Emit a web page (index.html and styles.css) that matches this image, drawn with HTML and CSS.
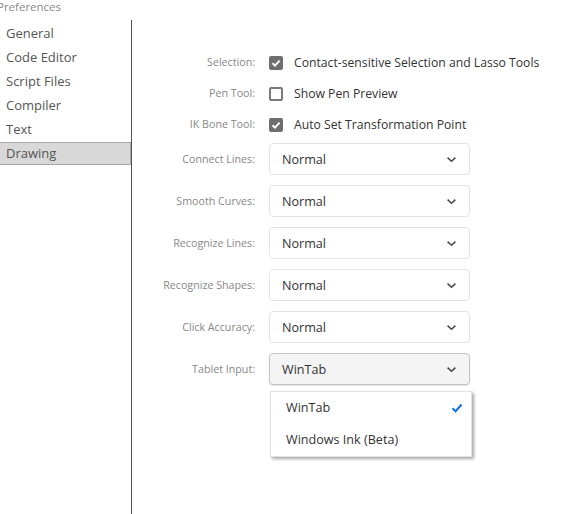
FILE: index.html
```html
<!DOCTYPE html>
<html>
<head>
<meta charset="utf-8">
<link rel="stylesheet" href="styles.css">
</head>
<body>
<div class="title">Preferences</div>
<div class="window">
  <nav class="sidebar">
    <div class="nav-item">General</div>
    <div class="nav-item">Code Editor</div>
    <div class="nav-item">Script Files</div>
    <div class="nav-item">Compiler</div>
    <div class="nav-item">Text</div>
    <div class="nav-item selected">Drawing</div>
  </nav>
  <main class="panel">
    <div class="form">
      <div class="label row-check">Selection:</div>
      <label class="check row-check"><span class="box checked"><svg viewBox="0 0 14 14"><path d="M3.5 7.2 L6 9.6 L10.6 4.6" /></svg></span>Contact-sensitive Selection and Lasso Tools</label>

      <div class="label row-check">Pen Tool:</div>
      <label class="check row-check"><span class="box"></span>Show Pen Preview</label>

      <div class="label row-check">IK Bone Tool:</div>
      <label class="check row-check"><span class="box checked"><svg viewBox="0 0 14 14"><path d="M3.5 7.2 L6 9.6 L10.6 4.6" /></svg></span>Auto Set Transformation Point</label>

      <div class="label row-select first">Connect Lines:</div>
      <div class="select first">Normal<svg class="chev" viewBox="0 0 12 8"><path d="M1.5 1.8 L6 6 L10.5 1.8"/></svg></div>

      <div class="label row-select">Smooth Curves:</div>
      <div class="select">Normal<svg class="chev" viewBox="0 0 12 8"><path d="M1.5 1.8 L6 6 L10.5 1.8"/></svg></div>

      <div class="label row-select">Recognize Lines:</div>
      <div class="select">Normal<svg class="chev" viewBox="0 0 12 8"><path d="M1.5 1.8 L6 6 L10.5 1.8"/></svg></div>

      <div class="label row-select">Recognize Shapes:</div>
      <div class="select">Normal<svg class="chev" viewBox="0 0 12 8"><path d="M1.5 1.8 L6 6 L10.5 1.8"/></svg></div>

      <div class="label row-select">Click Accuracy:</div>
      <div class="select">Normal<svg class="chev" viewBox="0 0 12 8"><path d="M1.5 1.8 L6 6 L10.5 1.8"/></svg></div>

      <div class="label row-select">Tablet Input:</div>
      <div class="select-wrap">
        <div class="select open">WinTab<svg class="chev" viewBox="0 0 12 8"><path d="M1.5 1.8 L6 6 L10.5 1.8"/></svg></div>
        <ul class="menu">
          <li class="menu-item">WinTab<svg class="tick" viewBox="0 0 12 10"><path d="M1.5 5.2 L4.6 8.2 L10.6 1.6"/></svg></li>
          <li class="menu-item">Windows Ink (Beta)</li>
        </ul>
      </div>
    </div>
  </main>
</div>
</body>
</html>
```
FILE: styles.css
```css
html, body {
  margin: 0;
  padding: 0;
  background: #fff;
  height: 100%;
  overflow: hidden;
}
body {
  font-family: "Open Sans", "Noto Sans", sans-serif;
  color: #333;
}
.title {
  height: 20px;
  line-height: 14px;
  font-size: 11.5px;
  color: #8a8a8a;
  margin-left: -3px;
}
.window {
  display: flex;
  height: 494px;
}
.sidebar {
  width: 131px;
  border-right: 1px solid #555;
  padding-top: 2px;
  flex: none;
}
.nav-item {
  height: 24px;
  line-height: 23px;
  font-size: 13px;
  color: #555;
  padding-left: 6px;
  box-sizing: border-box;
}
.nav-item.selected {
  background: #d8d8d8;
  border-top: 1px solid #a8a8a8;
  border-bottom: 1px solid #a8a8a8;
  border-right: 1px solid #a8a8a8;
  height: 23px;
  line-height: 20px;
  margin-top: 0;
}
.panel {
  flex: 1;
  padding-top: 27px;
}
.form {
  display: grid;
  grid-template-columns: 123px 201px;
  column-gap: 14px;
  align-items: center;
}
.label {
  text-align: right;
  font-size: 10.7px;
  color: #888;
}
.row-check {
  height: 31px;
  line-height: 31px;
}
.row-select {
  height: 32px;
  line-height: 32px;
  margin-top: 10px;
}
.row-select.first, .select.first {
  margin-top: 3px;
}
.check {
  display: flex;
  align-items: center;
  white-space: nowrap;
  font-size: 12.2px;
  color: #333;
}
.box {
  width: 14px;
  height: 14px;
  box-sizing: border-box;
  border: 2px solid #7a7a7a;
  border-radius: 2px;
  margin-right: 11px;
  flex: none;
  display: flex;
}
.box.checked {
  background: #6e6e6e;
  border-color: #6e6e6e;
}
.box svg {
  width: 14px;
  height: 14px;
  margin: -2px;
  fill: none;
  stroke: #fff;
  stroke-width: 2;
}
.select {
  height: 32px;
  box-sizing: border-box;
  border: 1px solid #e3e3e3;
  border-radius: 4px;
  margin-top: 10px;
  padding: 0 12px;
  display: flex;
  align-items: center;
  justify-content: space-between;
  font-size: 12.6px;
  color: #333;
  background: #fff;
}
.select.open {
  background: #f4f4f4;
  border-color: #c4c4c4;
  box-shadow: 0 1px 1px rgba(0,0,0,0.12);
}
.chev {
  width: 11px;
  height: 7px;
  fill: none;
  stroke: #4a4a4a;
  stroke-width: 1.8;
}
.select-wrap {
  position: relative;
}
.menu {
  position: absolute;
  top: 48px;
  left: 1px;
  width: 202px;
  box-sizing: border-box;
  margin: 0;
  padding: 0;
  list-style: none;
  background: #fff;
  border: 1px solid #e2e2e2;
  box-shadow: 2px 2px 3px rgba(0,0,0,0.35);
}
.menu-item {
  height: 32px;
  line-height: 32px;
  padding-left: 15px;
  padding-right: 8px;
  font-size: 12.6px;
  color: #333;
  display: flex;
  align-items: center;
  justify-content: space-between;
}
.tick {
  width: 12px;
  height: 10px;
  fill: none;
  stroke: #1473e6;
  stroke-width: 2.2;
}
```
